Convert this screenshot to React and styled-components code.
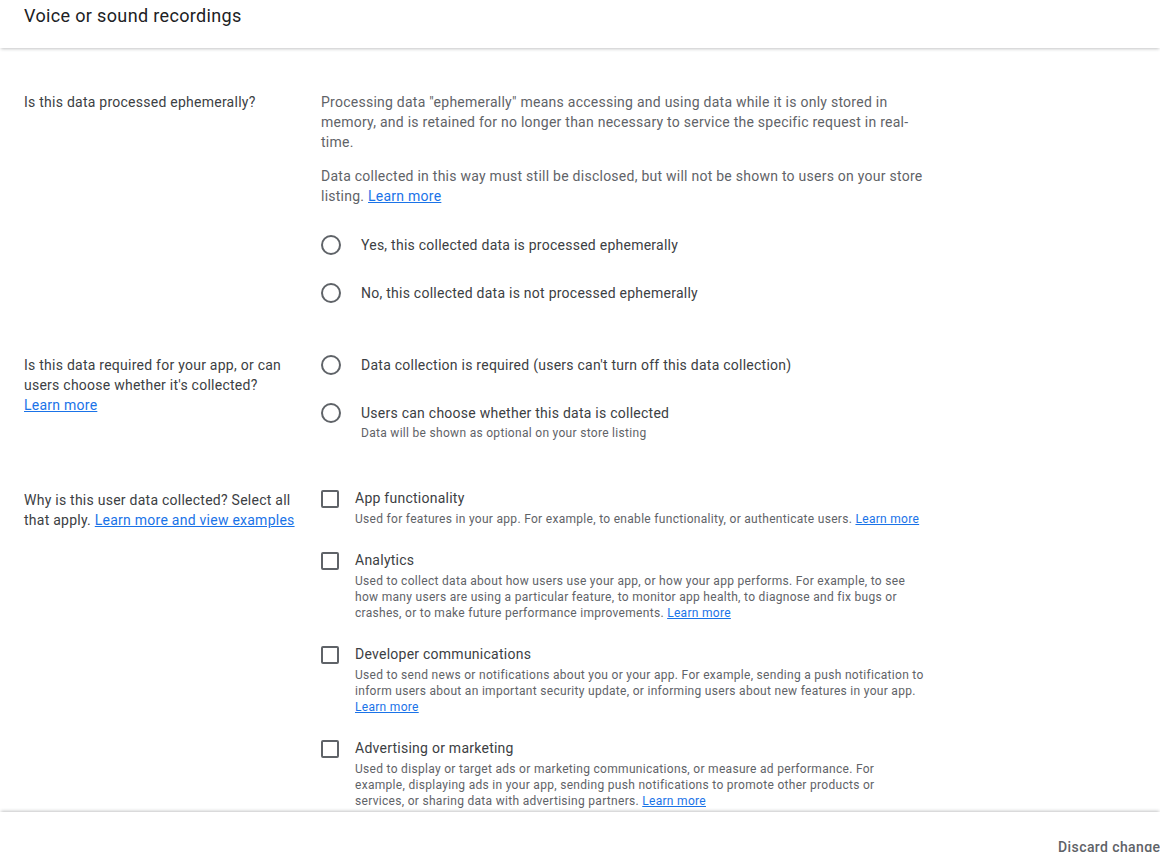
import React from 'react';
import styled, { createGlobalStyle } from 'styled-components';

const GlobalStyle = createGlobalStyle`
  html, body {
    margin: 0;
    padding: 0;
    overflow: hidden;
    background: #fff;
  }
  body {
    font-family: Roboto, "Liberation Sans", Arial, sans-serif;
    -webkit-font-smoothing: antialiased;
  }
`;

const Page = styled.div`
  display: flex;
  flex-direction: column;
  height: 882px;
  width: 1160px;
  overflow: hidden;
`;

const Header = styled.header`
  position: relative;
  z-index: 1;
  height: 48px;
  flex: none;
  display: flex;
  align-items: flex-start;
  padding: 4px 24px 0;
  box-sizing: border-box;
  background: #fff;
  box-shadow: 0 2px 3px -1px rgba(60, 64, 67, 0.3);
`;

const Title = styled.h1`
  margin: 0;
  font-size: 18px;
  line-height: 24px;
  font-weight: 400;
  color: #202124;
  letter-spacing: 0.35px;
`;

const Main = styled.main`
  flex: 1;
  overflow: hidden;
  padding: 44px 0 0 24px;
  display: flex;
  flex-direction: column;
  gap: 24px;
`;

const Section = styled.section`
  display: grid;
  grid-template-columns: 273px 604px;
  column-gap: 24px;
  align-items: start;
`;

const Label = styled.div`
  font-size: 14px;
  line-height: 20px;
  letter-spacing: 0.25px;
  color: #3c4043;
  padding-top: ${p => p.$offset || 0}px;
`;

const Link = styled.a`
  color: #1a73e8;
  text-decoration: underline;
  cursor: pointer;
`;

const Content = styled.div`
  display: flex;
  flex-direction: column;
`;

const Para = styled.p`
  margin: 0 0 14px;
  font-size: 14px;
  line-height: 20px;
  letter-spacing: 0.25px;
  color: #5f6368;
  &:last-of-type {
    margin-bottom: 15px;
  }
`;

const RadioRow = styled.label`
  display: flex;
  align-items: flex-start;
  gap: 20px;
  padding: 14px 0;
  cursor: pointer;
`;

const RadioCircle = styled.span`
  flex: none;
  width: 20px;
  height: 20px;
  box-sizing: border-box;
  border: 2px solid #5f6368;
  border-radius: 50%;
`;

const OptionText = styled.div`
  display: flex;
  flex-direction: column;
`;

const OptionTitle = styled.span`
  font-size: 14px;
  line-height: 20px;
  letter-spacing: 0.25px;
  color: #3c4043;
`;

const OptionHint = styled.span`
  font-size: 12px;
  line-height: 16px;
  letter-spacing: 0.3px;
  color: #5f6368;
  margin-top: ${p => p.$gap || 0}px;
`;

const CheckList = styled.div`
  display: flex;
  flex-direction: column;
  gap: 23px;
  padding-top: 9px;
`;

const CheckRow = styled.label`
  display: flex;
  align-items: flex-start;
  gap: 16px;
  cursor: pointer;
`;

const CheckBox = styled.span`
  flex: none;
  width: 18px;
  height: 18px;
  margin-top: 2px;
  box-sizing: border-box;
  border: 2px solid #5f6368;
  border-radius: 2px;
`;

const Footer = styled.footer`
  position: relative;
  z-index: 1;
  height: 70px;
  flex: none;
  display: flex;
  align-items: center;
  justify-content: flex-end;
  background: #fff;
  box-shadow: 0 -2px 3px -1px rgba(60, 64, 67, 0.3);
  overflow: hidden;
`;

const Actions = styled.div`
  display: flex;
  align-items: center;
  gap: 16px;
  margin-right: -56px;
  white-space: nowrap;
`;

const TextButton = styled.button`
  border: none;
  background: none;
  padding: 0;
  font-family: Roboto, "Liberation Sans", Arial, sans-serif;
  font-size: 14px;
  font-weight: 500;
  letter-spacing: 0.4px;
  color: #5f6368;
  cursor: pointer;
`;

const purposes = [
  {
    title: 'App functionality',
    desc: 'Used for features in your app. For example, to enable functionality, or authenticate users.',
  },
  {
    title: 'Analytics',
    desc: 'Used to collect data about how users use your app, or how your app performs. For example, to see how many users are using a particular feature, to monitor app health, to diagnose and fix bugs or crashes, or to make future performance improvements.',
  },
  {
    title: 'Developer communications',
    desc: 'Used to send news or notifications about you or your app. For example, sending a push notification to inform users about an important security update, or informing users about new features in your app.',
  },
  {
    title: 'Advertising or marketing',
    desc: 'Used to display or target ads or marketing communications, or measure ad performance. For example, displaying ads in your app, sending push notifications to promote other products or services, or sharing data with advertising partners.',
  },
];

const Radio = ({ title, hint }) => (
  <RadioRow>
    <RadioCircle />
    <OptionText>
      <OptionTitle>{title}</OptionTitle>
      {hint && <OptionHint $gap={2}>{hint}</OptionHint>}
    </OptionText>
  </RadioRow>
);

const App = () => (
  <>
    <GlobalStyle />
    <Page>
      <Header>
        <Title>Voice or sound recordings</Title>
      </Header>

      <Main>
        <Section>
          <Label>Is this data processed ephemerally?</Label>
          <Content>
            <Para>
              Processing data "ephemerally" means accessing and using data while it is only stored in
              memory, and is retained for no longer than necessary to service the specific request in real-time.
            </Para>
            <Para>
              Data collected in this way must still be disclosed, but will not be shown to users on your store
              listing. <Link>Learn more</Link>
            </Para>
            <Radio title="Yes, this collected data is processed ephemerally" />
            <Radio title="No, this collected data is not processed ephemerally" />
          </Content>
        </Section>

        <Section>
          <Label $offset={14}>
            Is this data required for your app, or can users choose whether it's collected?
            <br />
            <Link>Learn more</Link>
          </Label>
          <Content>
            <Radio title="Data collection is required (users can't turn off this data collection)" />
            <Radio
              title="Users can choose whether this data is collected"
              hint="Data will be shown as optional on your store listing"
            />
          </Content>
        </Section>

        <Section>
          <Label $offset={11}>
            Why is this user data collected? Select all that apply. <Link>Learn more and view examples</Link>
          </Label>
          <CheckList>
            {purposes.map(p => (
              <CheckRow key={p.title}>
                <CheckBox />
                <OptionText>
                  <OptionTitle>{p.title}</OptionTitle>
                  <OptionHint $gap={3}>
                    {p.desc} <Link>Learn more</Link>
                  </OptionHint>
                </OptionText>
              </CheckRow>
            ))}
          </CheckList>
        </Section>
      </Main>

      <Footer>
        <Actions>
          <TextButton>Discard changes</TextButton>
          <TextButton>Save</TextButton>
        </Actions>
      </Footer>
    </Page>
  </>
);

export default App;
